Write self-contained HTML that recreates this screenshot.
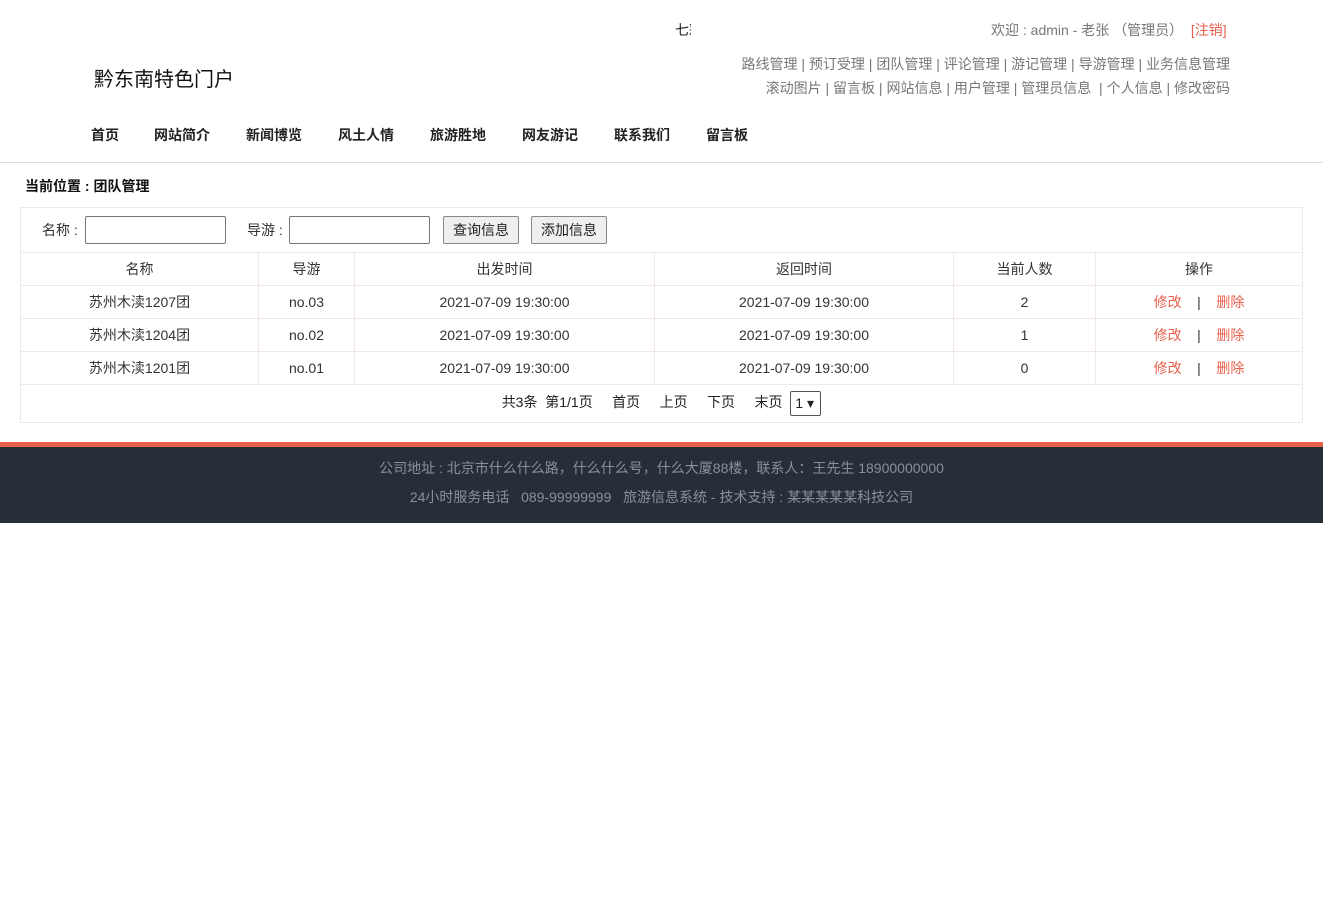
<!DOCTYPE html>
<html><head><meta charset="utf-8"><style>
*{margin:0;padding:0;box-sizing:border-box}
body{width:1323px;height:914px;background:#fff;font-family:"Liberation Sans","Noto Sans CJK SC",sans-serif;font-size:14px;color:#333;position:relative;overflow:hidden}
.a{position:absolute;white-space:nowrap}
.g{color:#777}
.nav b{position:absolute;top:125px;font-size:14px;color:#222}
table{position:absolute;left:20px;top:252px;width:1283px;border-collapse:collapse}
td{border:1px solid #f1e7ea;height:33px;text-align:center;font-size:14px;color:#333}
.r{color:#e8604c}
input{position:absolute;height:28px;border:1px solid #777;border-radius:2px;background:#fff}
button{position:absolute;height:28px;border:1px solid #888;border-radius:2px;background:#efefef;font-family:"Liberation Sans","Noto Sans CJK SC",sans-serif;font-size:14px;color:#222}
</style></head><body>
<div class="a" style="left:675px;top:20px;font-size:14px;color:#222;width:16px;overflow:hidden">七彩</div>
<div class="a g" style="left:991px;top:20px">欢迎 : admin - 老张 （管理员） &nbsp;<span class="r">[注销]</span></div>
<div class="a" style="left:94px;top:63px;font-size:20px;color:#111">黔东南特色门户</div>
<div class="a g" style="right:93px;top:54px">路线管理 | 预订受理 | 团队管理 | 评论管理 | 游记管理 | 导游管理 | 业务信息管理</div>
<div class="a g" style="right:93px;top:78px">滚动图片 | 留言板 | 网站信息 | 用户管理 | 管理员信息 &nbsp;| 个人信息 | 修改密码</div>
<div class="nav"><b style="left:91px">首页</b><b style="left:154px">网站简介</b><b style="left:246px">新闻博览</b><b style="left:338px">风土人情</b><b style="left:430px">旅游胜地</b><b style="left:522px">网友游记</b><b style="left:614px">联系我们</b><b style="left:706px">留言板</b></div>
<div class="a" style="left:0;top:162px;width:1323px;height:1px;background:#ddd"></div>
<div class="a" style="left:25px;top:176px;font-weight:bold;color:#111">当前位置 : 团队管理</div>
<div class="a" style="left:20px;top:207px;width:1283px;height:46px;border:1px solid #f1e7ea;border-bottom:none"></div>
<div class="a" style="left:42px;top:220px">名称 :</div>
<input style="left:85px;top:216px;width:141px">
<div class="a" style="left:247px;top:220px">导游 :</div>
<input style="left:289px;top:216px;width:141px">
<button style="left:443px;top:216px;width:76px">查询信息</button>
<button style="left:531px;top:216px;width:76px">添加信息</button>
<table>
<tr><td style="width:238px">名称</td><td style="width:96px">导游</td><td style="width:300px">出发时间</td><td style="width:299px">返回时间</td><td style="width:142px">当前人数</td><td>操作</td></tr>
<tr><td>苏州木渎1207团</td><td>no.03</td><td>2021-07-09 19:30:00</td><td>2021-07-09 19:30:00</td><td>2</td><td><span class="r">修改</span> &nbsp;&nbsp; | &nbsp;&nbsp; <span class="r">删除</span></td></tr>
<tr><td>苏州木渎1204团</td><td>no.02</td><td>2021-07-09 19:30:00</td><td>2021-07-09 19:30:00</td><td>1</td><td><span class="r">修改</span> &nbsp;&nbsp; | &nbsp;&nbsp; <span class="r">删除</span></td></tr>
<tr><td>苏州木渎1201团</td><td>no.01</td><td>2021-07-09 19:30:00</td><td>2021-07-09 19:30:00</td><td>0</td><td><span class="r">修改</span> &nbsp;&nbsp; | &nbsp;&nbsp; <span class="r">删除</span></td></tr>
<tr><td colspan="6" style="height:38px;color:#222">共3条 &nbsp;第1/1页 &nbsp;&nbsp;&nbsp; 首页 &nbsp;&nbsp;&nbsp; 上页 &nbsp;&nbsp;&nbsp; 下页 &nbsp;&nbsp;&nbsp; 末页 &nbsp;<span style="display:inline-block;width:31px;height:25px;border:1px solid #555;border-radius:2px;vertical-align:middle;text-align:left;padding-left:4px;line-height:23px">1 ▾</span></td></tr>
</table>
<div class="a" style="left:0;top:442px;width:1323px;height:81px;background:#262e38;border-top:5px solid #e8604c"></div>
<div class="a" style="left:0;top:458px;width:1323px;text-align:center;color:#8a9099;font-size:14px">公司地址 : 北京市什么什么路，什么什么号，什么大厦88楼，联系人：王先生 18900000000</div>
<div class="a" style="left:0;top:487px;width:1323px;text-align:center;color:#8a9099;font-size:14px">24小时服务电话 &nbsp; 089-99999999 &nbsp; 旅游信息系统 - 技术支持 : 某某某某某科技公司</div>
</body></html>
